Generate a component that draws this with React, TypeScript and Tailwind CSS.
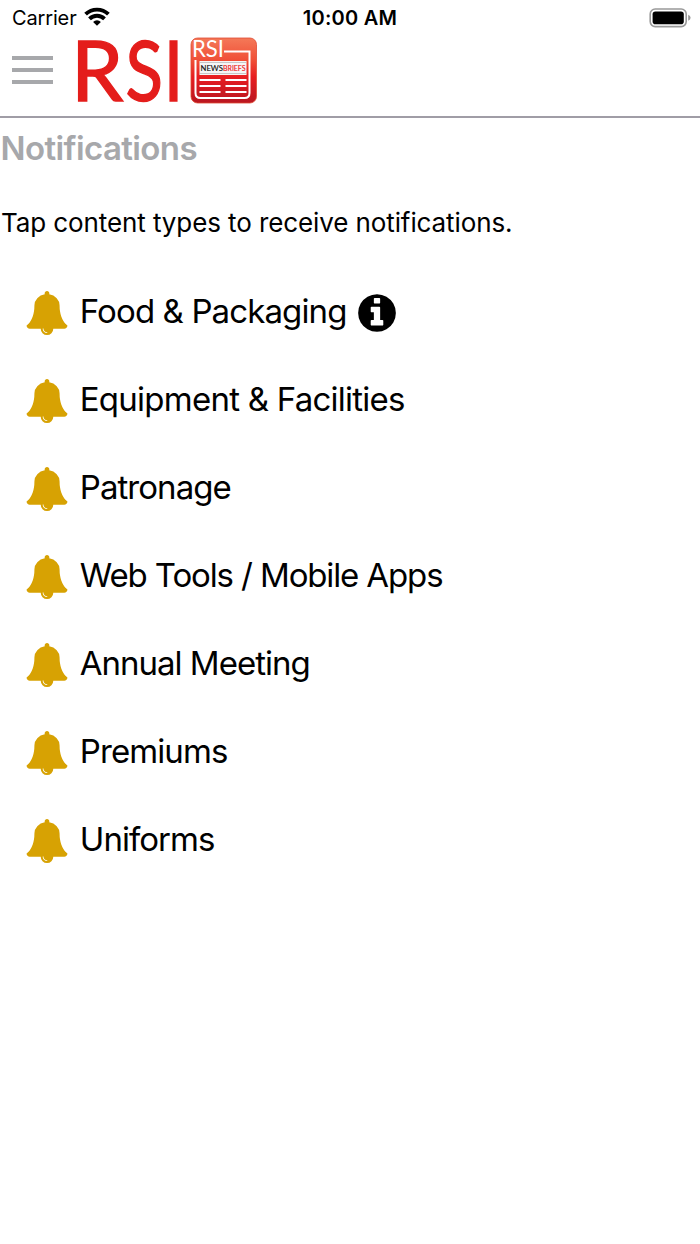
const topics = [
  { name: "Food & Packaging", tracking: "tracking-[-0.88px]", info: true },
  { name: "Equipment & Facilities", tracking: "tracking-[-0.75px]" },
  { name: "Patronage", tracking: "tracking-[-0.95px]" },
  { name: "Web Tools / Mobile Apps", tracking: "tracking-[-1.13px]" },
  { name: "Annual Meeting", tracking: "tracking-[-1px]" },
  { name: "Premiums", tracking: "tracking-[-0.9px]" },
  { name: "Uniforms", tracking: "tracking-[-0.95px]" },
];

function Bell() {
  return (
    <svg viewBox="0 0 1792 1792" className="size-11 shrink-0 fill-[#d7a203]">
      <path d="M912 1696q0-16-16-16-59 0-101.5-42.5t-42.5-101.5q0-16-16-16t-16 16q0 73 51.5 124.5t124.5 51.5q16 0 16-16zm816-288q0 52-38 90t-90 38h-448q0 106-75 181t-181 75-181-75-75-181h-448q-52 0-90-38t-38-90q50-42 91-88t85-119.5 74.5-158.5 50-206 19.500-260q0-152 117-282.5t307-158.5q-8-19-8-39 0-40 28-68t68-28 68 28 28 68q0 20-8 39 190 28 307 158.5t117 282.5q0 139 19.500 260t50 206 74.5 158.5 85 119.5 91 88z" />
    </svg>
  );
}

function Info() {
  return (
    <svg viewBox="0 0 1792 1792" className="ml-2 size-11 shrink-0 fill-black">
      <path d="M1152 1376v-160q0-14-9-23t-23-9h-96v-512q0-14-9-23t-23-9h-320q-14 0-23 9t-9 23v160q0 14 9 23t23 9h96v320h-96q-14 0-23 9t-9 23v160q0 14 9 23t23 9h448q14 0 23-9t9-23zm-128-896v-160q0-14-9-23t-23-9h-192q-14 0-23 9t-9 23v160q0 14 9 23t23 9h192q14 0 23-9t9-23zm640 416q0 209-103 385.5t-279.5 279.5-385.5 103-385.5-103-279.5-279.5-103-385.5 103-385.5 279.5-279.5 385.5-103 385.5 103 279.5 279.5 103 385.5z" />
    </svg>
  );
}

function StatusBar() {
  return (
    <div className="grid h-9 grid-cols-3 items-center pl-3 pr-[9px]">
      <div className="flex items-center gap-[7px]">
        <span className="text-[20px] leading-9 tracking-[-0.15px]">Carrier</span>
        <svg viewBox="0 0 26 19" className="mb-[3px] h-[19px] w-[26px]" fill="none" stroke="#000" strokeWidth="3.9">
          <path d="M1.6 7.2a16.4 16.4 0 0 1 22.8 0" />
          <path d="M5.500 11.8a10.7 10.7 0 0 1 15 0" />
          <path d="M13 18.8l-3.9-3.900a5.500 5.500 0 0 1 7.8 0z" fill="#000" stroke="none" />
        </svg>
      </div>
      <span className="-ml-[3px] text-center text-[20px] font-semibold tracking-[0.25px]">10:00 AM</span>
      <svg viewBox="0 0 42 20" className="mb-px h-5 w-[42px] justify-self-end">
        <rect x="1.2" y="1" width="36" height="17.6" rx="5" fill="none" stroke="#999" strokeWidth="1.6" />
        <rect x="3.6" y="3.4" width="31.2" height="12.8" rx="2.8" />
        <path d="M39.2 6.8q2.4 1 2.4 3t-2.4 3z" fill="#999" />
      </svg>
    </div>
  );
}

function Logo() {
  return (
    <div className="flex h-[70px] items-start">
      <svg viewBox="0 -8 112 102" className="-mt-2 h-[102px] w-[112px] overflow-visible">
        <g fontFamily="Lato, sans-serif" fontSize="83.500" fill="#e41d1b" stroke="#e41d1b" strokeWidth="1.400">
          <text x="-5" y="64.500">R</text>
          <text x="49.500" y="64.500" textLength="37.500" lengthAdjust="spacingAndGlyphs">S</text>
          <text x="87.500" y="64.500" textLength="20" lengthAdjust="spacingAndGlyphs">I</text>
        </g>
      </svg>
      <svg viewBox="0 0 70 70" className="size-[70px]">
        <defs>
          <linearGradient id="tile" x1="0" y1="0" x2="0" y2="1">
            <stop offset="0" stopColor="#f47958" />
            <stop offset="0.35" stopColor="#f04e36" />
            <stop offset="0.6" stopColor="#e71d20" />
            <stop offset="1" stopColor="#b91620" />
          </linearGradient>
        </defs>
        <rect x="3" y="2" width="65.500" height="65" rx="6.500" fill="url(#tile)" stroke="#df4a32" strokeWidth="0.8" />
        <path d="M7.500 24V57q0 5 5 5h44q5 0 5-5V15.500H36" fill="none" stroke="#fff" strokeWidth="2" />
        <text x="4" y="20.500" fontFamily="Lato, sans-serif" fontSize="23" fill="#fff" textLength="32" lengthAdjust="spacingAndGlyphs">RSI</text>
        <rect x="11.500" y="25" width="47" height="14" fill="#f6f6f6" />
        <path d="M12 26.500H58M12 37.500H58" stroke="#aaa" strokeWidth="0.6" />
        <text x="12.500" y="34.800" fontFamily="Lato, sans-serif" fontSize="8" fill="#111" stroke="#111" strokeWidth="0.15">
          <tspan textLength="22.500" lengthAdjust="spacingAndGlyphs">NEWS</tspan>
          <tspan fill="#e22" stroke="#e22" x="35" textLength="22.500" lengthAdjust="spacingAndGlyphs">BRIEFS</tspan>
        </text>
        <path d="M11.500 44H32.500M37.500 44H58.500M11.500 50H32.500M37.500 50H58.500M11.500 56H32.500M37.500 56H58.500" stroke="#fff" strokeWidth="2" />
      </svg>
    </div>
  );
}

export default function App() {
  return (
    <main className="min-h-[1244px] w-full overflow-hidden bg-white font-['Inter',sans-serif] text-black">
      <StatusBar />
      <header className="flex h-[82px] items-start border-b-2 border-[#a09da6] pl-3">
        <button aria-label="Menu" className="mt-5 flex w-[41px] flex-col gap-2">
          <span className="h-1 w-full bg-[#a7a8ab]" />
          <span className="h-1 w-full bg-[#a7a8ab]" />
          <span className="h-1 w-full bg-[#a7a8ab]" />
        </button>
        <div className="ml-[23px]">
          <Logo />
        </div>
      </header>
      <h1 className="mt-[7px] pl-[0.5px] text-[33px] font-semibold leading-[46px] tracking-[-0.6px] text-[#a7a8ab]">
        <span>Notifications</span>
      </h1>
      <p className="mt-[33px] whitespace-nowrap pl-px text-[26px] leading-[38px] tracking-[-0.1px]">
        <span>Tap content types to receive notifications.</span>
      </p>
      <ul className="mt-[49px] flex flex-col gap-11 pl-[25.4px]">
        {topics.map((t) => (
          <li key={t.name} className="flex h-11 items-center">
            <Bell />
            <span className={`-mt-[5px] ml-[10.4px] whitespace-nowrap text-[33px] leading-[44px] ${t.tracking}`}>{t.name}</span>
            {t.info && <Info />}
          </li>
        ))}
      </ul>
    </main>
  );
}
